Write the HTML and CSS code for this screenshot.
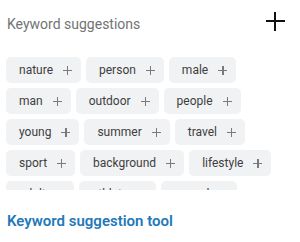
FILE: index.html
```html
<!DOCTYPE html>
<html lang="en">

<head>
    <meta charset="UTF-8">
    <meta name="viewport" content="width=device-width, initial-scale=1.0">
    <title>Keyword suggestions</title>
    <link rel="stylesheet" href="styles.css">
</head>

<body>
    <div class="panel">
        <div class="panel-head">
            <h2 class="panel-title">Keyword suggestions</h2>
            <button class="add-all" aria-label="Add">
                <svg width="20" height="20" viewBox="0 0 20 20"><path d="M10 1v19M1 10h19" stroke="#111" stroke-width="2" fill="none"/></svg>
            </button>
        </div>

        <div class="chips">
            <span class="chip">nature <i class="plus"></i></span>
            <span class="chip">person <i class="plus"></i></span>
            <span class="chip">male <i class="plus"></i></span>
            <span class="chip">man <i class="plus"></i></span>
            <span class="chip">outdoor <i class="plus"></i></span>
            <span class="chip">people <i class="plus"></i></span>
            <span class="chip">young <i class="plus"></i></span>
            <span class="chip">summer <i class="plus"></i></span>
            <span class="chip">travel <i class="plus"></i></span>
            <span class="chip">sport <i class="plus"></i></span>
            <span class="chip">background <i class="plus"></i></span>
            <span class="chip">lifestyle <i class="plus"></i></span>
            <span class="chip">adult <i class="plus"></i></span>
            <span class="chip">athlete <i class="plus"></i></span>
            <span class="chip">casual <i class="plus"></i></span>
        </div>

        <a class="tool-link" href="#">Keyword suggestion tool</a>
    </div>
</body>

</html>
```

FILE: styles.css
```css
body {
    margin: 0;
    background: #fff;
    font-family: Roboto, "Liberation Sans", sans-serif;
}

.panel {
    width: 300px;
    padding: 12px 0 0 0;
}

.panel-head {
    display: flex;
    align-items: center;
    justify-content: space-between;
    height: 24px;
    padding: 0 15px 0 7px;
}

.panel-title {
    margin: 0;
    font-size: 14px;
    font-weight: 400;
    color: #737373;
}

.add-all {
    border: 0;
    background: none;
    padding: 0;
    width: 20px;
    height: 20px;
    margin-top: -6px;
    cursor: pointer;
}

.add-all svg {
    display: block;
}

.chips {
    display: flex;
    flex-wrap: wrap;
    gap: 5px 5px;
    margin-top: 21px;
    padding: 0 10px 0 6px;
    max-height: 133px;
    overflow: hidden;
}

.chip {
    display: flex;
    align-items: center;
    gap: 10px;
    height: 26px;
    padding: 0 9px 0 13px;
    background: #f1f2f4;
    border-radius: 5px;
    font-size: 12px;
    color: #3e3e3e;
}

.plus {
    position: relative;
    width: 9px;
    height: 9px;
}

.plus::before,
.plus::after {
    content: "";
    position: absolute;
    background: #7a7a7a;
}

.plus::before {
    left: 0;
    right: 0;
    top: 4px;
    height: 1.3px;
}

.plus::after {
    top: 0;
    bottom: 0;
    left: 4px;
    width: 1.3px;
}

.tool-link {
    display: block;
    margin: 21px 0 0 7px;
    line-height: 20px;
    font-size: 15px;
    font-weight: 600;
    color: #2279b9;
    text-decoration: none;
}
```
